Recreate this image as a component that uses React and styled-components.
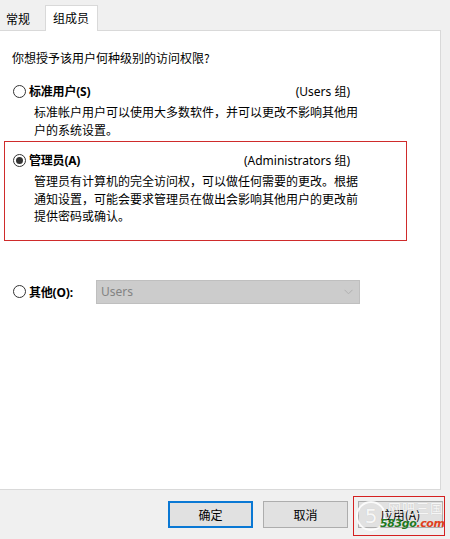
import React from "react";
import styled, { createGlobalStyle } from "styled-components";

const Global = createGlobalStyle`
  html, body { margin: 0; padding: 0; background: #f0f0f0; }
  body {
    font-family: "Segoe UI", "Noto Sans", "Noto Sans CJK SC", sans-serif;
    font-size: 12px;
    color: #000;
  }
`;

const Window = styled.div`
  position: relative;
  width: 450px;
  height: 539px;
  background: #f0f0f0;
  display: flex;
  flex-direction: column;
  overflow: hidden;
`;

const TabStrip = styled.div`
  height: 30px;
  display: flex;
  align-items: flex-end;
  position: relative;
  z-index: 1;
`;

const Tab = styled.div`
  box-sizing: border-box;
  height: ${(p) => (p.$active ? "26px" : "22px")};
  margin-bottom: ${(p) => (p.$active ? "-1px" : "0")};
  padding: ${(p) => (p.$active ? "3px 0 0 7px" : "1px 0 0 5px")};
  width: ${(p) => (p.$active ? "53px" : "45px")};
  background: ${(p) => (p.$active ? "#ffffff" : "#f0f0f0")};
  border: 1px solid ${(p) => (p.$active ? "#d9d9d9" : "transparent")};
  border-bottom: none;
  font-family: "Noto Sans CJK SC", sans-serif;
  font-size: 12px;
  line-height: 18px;
  white-space: nowrap;
`;

const Panel = styled.div`
  box-sizing: border-box;
  width: 441px;
  height: 460px;
  background: #ffffff;
  border: 1px solid #d9d9d9;
  border-left: none;
  padding: 19px 0 0 0;
  display: flex;
  flex-direction: column;
`;

const Question = styled.div`
  font-family: "Noto Sans CJK SC", sans-serif;
  line-height: 16px;
  padding-left: 12px;
  margin-bottom: 16px;
`;

const Option = styled.div`
  box-sizing: border-box;
  width: ${(p) => (p.$boxed ? "403px" : "auto")};
  margin-left: ${(p) => (p.$boxed ? "4px" : "0")};
  padding: ${(p) => (p.$boxed ? "9px 0 15px 8px" : "0 0 0 13px")};
  border: ${(p) => (p.$boxed ? "1px solid #cf2b2b" : "none")};
  display: flex;
  flex-direction: column;
`;

const OptionRow = styled.div`
  display: flex;
  align-items: center;
  height: 18px;
  width: 337px;
`;

const Radio = styled.span`
  box-sizing: border-box;
  width: 13px;
  height: 13px;
  border-radius: 50%;
  border: 1px solid #333333;
  background: #fff;
  display: inline-flex;
  align-items: center;
  justify-content: center;
  flex: none;
  &::after {
    content: "";
    width: 7px;
    height: 7px;
    border-radius: 50%;
    background: ${(p) => (p.$checked ? "#333333" : "transparent")};
  }
`;

const Label = styled.span`
  margin-left: 3px;
  font-weight: 700;
  font-family: "Segoe UI", "Noto Sans", "Noto Sans CJK SC", sans-serif;
  font-size: 12px;
  letter-spacing: -0.2px;
  white-space: nowrap;
`;

const Group = styled.span`
  margin-left: auto;
  font-family: "Segoe UI", "Noto Sans", "Noto Sans CJK SC", sans-serif;
  font-size: 12px;
  color: #000;
  white-space: nowrap;
`;

const Desc = styled.div`
  font-family: "Noto Sans CJK SC", sans-serif;
  font-size: 12px;
  line-height: 17.5px;
  padding-left: 21px;
  margin-top: 3px;
`;

const Spacer = styled.div`
  height: ${(p) => p.$h}px;
  flex: none;
`;

const OtherRow = styled.div`
  display: flex;
  align-items: center;
  padding-left: 13px;
  height: 24px;
`;

const OtherLabel = styled(Label)`
  width: 67px;
`;

const Select = styled.div`
  box-sizing: border-box;
  width: 264px;
  height: 24px;
  background: #cccccc;
  border: 1px solid #bfbfbf;
  display: flex;
  align-items: center;
  padding: 0 6px 0 4px;
  color: #838383;
  font-family: "Segoe UI", "Noto Sans", sans-serif;
  font-size: 12px;
`;

const Chevron = styled.svg`
  margin-left: auto;
`;

const Footer = styled.div`
  flex: 1;
  display: flex;
  align-items: flex-start;
  padding: 11px 0 0 168px;
  gap: 10px;
`;

const Button = styled.div`
  box-sizing: border-box;
  width: 85px;
  height: 27px;
  background: #e1e1e1;
  border: ${(p) => (p.$default ? "2px solid #0a78d4" : "1px solid #adadad")};
  display: flex;
  align-items: center;
  justify-content: center;
  font-family: "Noto Sans CJK SC", sans-serif;
  font-size: 12px;
`;

const Watermark = styled.div`
  position: absolute;
  left: 353px;
  top: 496px;
  width: 92px;
  height: 40px;
  box-sizing: border-box;
  border: 1px solid #d42020;
  pointer-events: none;
`;

const WmCircle = styled.div`
  position: absolute;
  left: 2px;
  top: 4px;
  width: 30px;
  height: 30px;
  box-sizing: border-box;
  border: 2px solid rgba(255, 255, 255, 0.85);
  border-radius: 50%;
  display: flex;
  align-items: center;
  justify-content: center;
  color: rgba(255, 255, 255, 0.9);
  font-family: "DejaVu Sans", sans-serif;
  font-size: 20px;
  text-shadow: 0 0 1px rgba(0, 0, 0, 0.15);
`;

const WmTitle = styled.div`
  position: absolute;
  left: 34px;
  top: 1px;
  font-family: "Noto Sans CJK SC", sans-serif;
  font-size: 13px;
  letter-spacing: 1px;
  color: rgba(255, 255, 255, 0.85);
  text-shadow: 0 0 1px rgba(0, 0, 0, 0.15);
`;

const WmSite = styled.div`
  position: absolute;
  left: 26px;
  top: 20px;
  font-family: "DejaVu Sans", sans-serif;
  font-style: italic;
  font-weight: 700;
  font-size: 11px;
  letter-spacing: -0.4px;
  color: #1e7a1e;
  white-space: nowrap;
  & span {
    color: #e0401c;
  }
`;

export default function App() {
  return (
    <Window>
      <Global />
      <TabStrip>
        <Tab>常规</Tab>
        <Tab $active>组成员</Tab>
      </TabStrip>
      <Panel>
        <Question>你想授予该用户何种级别的访问权限?</Question>
        <Option>
          <OptionRow>
            <Radio />
            <Label>标准用户(S)</Label>
            <Group>(Users 组)</Group>
          </OptionRow>
          <Desc>
            标准帐户用户可以使用大多数软件，并可以更改不影响其他用
            <br />
            户的系统设置。
          </Desc>
        </Option>
        <Spacer $h={3} />
        <Option $boxed>
          <OptionRow>
            <Radio $checked />
            <Label>管理员(A)</Label>
            <Group>(Administrators 组)</Group>
          </OptionRow>
          <Desc>
            管理员有计算机的完全访问权，可以做任何需要的更改。根据
            <br />
            通知设置，可能会要求管理员在做出会影响其他用户的更改前
            <br />
            提供密码或确认。
          </Desc>
        </Option>
        <Spacer $h={39} />
        <OtherRow>
          <Radio />
          <OtherLabel>其他(O):</OtherLabel>
          <Select>
            Users
            <Chevron width="9" height="6" viewBox="0 0 9 6">
              <path d="M0.5 0.8 L4.5 4.8 L8.5 0.8" fill="none" stroke="#b0b0b0" strokeWidth="1" />
            </Chevron>
          </Select>
        </OtherRow>
      </Panel>
      <Footer>
        <Button $default>确定</Button>
        <Button>取消</Button>
        <Button>应用(A)</Button>
      </Footer>
      <Watermark>
        <WmCircle>5</WmCircle>
        <WmTitle>网吧三国</WmTitle>
        <WmSite>
          583go<span>.com</span>
        </WmSite>
      </Watermark>
    </Window>
  );
}
